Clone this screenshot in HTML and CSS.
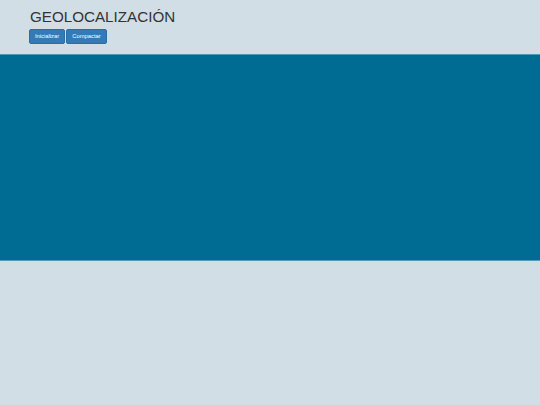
FILE: index.html
```html
<!DOCTYPE html>
<html lang="es">
<head>
<meta charset="utf-8">
<title>Geolocalización</title>
<link rel="stylesheet" href="styles.css">
</head>
<body>
<header class="header">
  <h1 class="title">GEOLOCALIZACIÓN</h1>
  <div class="actions">
    <button class="btn">Inicializar</button>
    <button class="btn">Compactar</button>
  </div>
</header>
<main class="map"></main>
</body>
</html>
```
FILE: styles.css
```css
html, body {
  margin: 0;
  padding: 0;
}
body {
  background: #d1dee6;
  font-family: "Liberation Sans", Arial, sans-serif;
  width: 540px;
  height: 405px;
  overflow: hidden;
}
.header {
  padding: 7px 0 0 29px;
  height: 47px;
  box-sizing: border-box;
}
.title {
  margin: 0 0 0 1px;
  font-size: 15.2px;
  font-weight: normal;
  color: #333;
  line-height: 20px;
}
.actions {
  display: flex;
  gap: 1px;
  margin-top: 2px;
}
.btn {
  background: #337ab7;
  border: 1px solid #2e6da4;
  border-radius: 2px;
  color: #fff;
  font-family: "Liberation Sans", Arial, sans-serif;
  font-size: 5.8px;
  height: 15px;
  padding: 0 5px;
  margin: 0;
  line-height: 13px;
}
.btn:first-child { width: 36px; }
.btn:last-child { width: 41px; }
.map {
  margin-top: 7px;
  height: 207px;
  background: #016c93;
  border-top: 1px solid #4c9cbc;
  border-bottom: 1px solid #4c9cbc;
  box-sizing: border-box;
}
```
